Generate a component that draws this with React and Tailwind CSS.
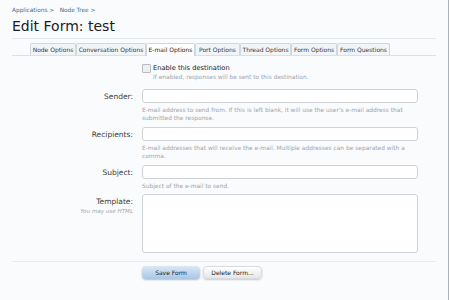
export default function App() {
  const tabs = [
    ["Node Options", 46],
    ["Conversation Options", 70],
    ["E-mail Options", 49],
    ["Port Options", 45],
    ["Thread Options", 51],
    ["Form Options", 46],
    ["Form Questions", 53],
  ];
  return (
    <div className="w-[449px] h-[300px] bg-[#fafbfd] border-r border-[#a9b1ba] overflow-hidden font-['DejaVu_Sans',sans-serif] text-[#222]">
      <div className="px-[12px]">
        <div className="pt-[7px] h-[18px] text-[5.8px] leading-[7px] text-[#4a6a8c] whitespace-pre">Applications &gt;   Node Tree &gt;</div>
        <h1 className="h-[20px] text-[14px] leading-[16px] text-[#1c1c1c]">Edit Form: test</h1>
        <div className="h-px bg-[#e4e8ec]"></div>
        <div className="mt-[4px] flex items-end border-b border-[#d3e3ed] pl-[18px] h-[13px]">
          {tabs.map(([t, w], i) => (
            <div
              key={t}
              style={{ width: w }}
              className={
                i === 2
                  ? "h-[13px] -mb-px bg-white border border-b-0 border-[#cfd8e0] text-[6px] leading-[12px] text-center text-[#222] rounded-t-[2px]"
                  : "h-[12px] bg-[#f1f5f8] border border-b-0 border-[#cfd8e0] text-[6px] leading-[11px] text-center text-[#383838] rounded-t-[2px]"
              }
            >
              {t}
            </div>
          ))}
        </div>

        <div className="grid grid-cols-[121px_276px] gap-x-[9px]">
          {/* checkbox row */}
          <div className="h-[30px]"></div>
          <div className="pt-[7px] h-[30px]">
            <div className="flex items-center gap-[2px] h-[10px]">
              <div className="w-[9px] h-[9px] border border-[#b7bcc2] bg-[#eef0f2] rounded-[1px]"></div>
              <span className="text-[6.7px] leading-[10px] text-[#222]">Enable this destination</span>
            </div>
            <div className="pl-[11px] text-[5.9px] leading-[8px] text-[#a0a5aa]">If enabled, responses will be sent to this destination.</div>
          </div>

          {/* sender */}
          <div className="pt-[4px] text-right text-[7.5px] leading-[14px] text-[#3a3a3a]">Sender:</div>
          <div className="pt-[3px]">
            <div className="h-[14px] bg-white border border-[#cfd3d7] rounded-[3px]"></div>
            <div className="pt-[3px] text-[5.9px] leading-[8px] text-[#a0a5aa] h-[24px]">E-mail address to send from. If this is left blank, it will use the user's e-mail address that submitted the response.</div>
          </div>

          {/* recipients */}
          <div className="pt-[1px] text-right text-[7.5px] leading-[14px] text-[#3a3a3a]">Recipients:</div>
          <div>
            <div className="h-[14px] bg-white border border-[#cfd3d7] rounded-[3px]"></div>
            <div className="pt-[3px] text-[5.9px] leading-[8px] text-[#a0a5aa] h-[24px]">E-mail addresses that will receive the e-mail. Multiple addresses can be separated with a comma.</div>
          </div>

          {/* subject */}
          <div className="pt-[1px] text-right text-[7.5px] leading-[14px] text-[#3a3a3a]">Subject:</div>
          <div>
            <div className="h-[14px] bg-white border border-[#cfd3d7] rounded-[3px]"></div>
            <div className="pt-[3px] text-[5.9px] leading-[8px] text-[#a0a5aa] h-[15px]">Subject of the e-mail to send.</div>
          </div>

          {/* template */}
          <div className="text-right pt-[2px]">
            <div className="text-[7.5px] leading-[12px] text-[#3a3a3a]">Template:</div>
            <div className="text-[5.6px] leading-[6px] italic text-[#a0a5aa]">You may use HTML</div>
          </div>
          <div>
            <div className="h-[59px] bg-white border border-[#cfd3d7] rounded-[3px]"></div>
          </div>
        </div>

        <div className="mt-[8px] h-px bg-[#e6ebf0]"></div>
        <div className="pl-[130px] pt-[4px] flex gap-[3px]">
          <div className="w-[58px] h-[13px] rounded-[4px] bg-gradient-to-b from-[#dbe8f5] to-[#a9c6e6] shadow-[0_1px_2px_rgba(0,0,0,0.25)] text-[6px] leading-[13px] text-center text-[#222]">Save Form</div>
          <div className="w-[59px] h-[13px] rounded-[4px] bg-gradient-to-b from-[#ffffff] to-[#e4e6e9] border border-[#d8dbdf] shadow-[0_1px_2px_rgba(0,0,0,0.2)] text-[6px] leading-[11px] text-center text-[#222]">Delete Form...</div>
        </div>
      </div>
    </div>
  );
}
